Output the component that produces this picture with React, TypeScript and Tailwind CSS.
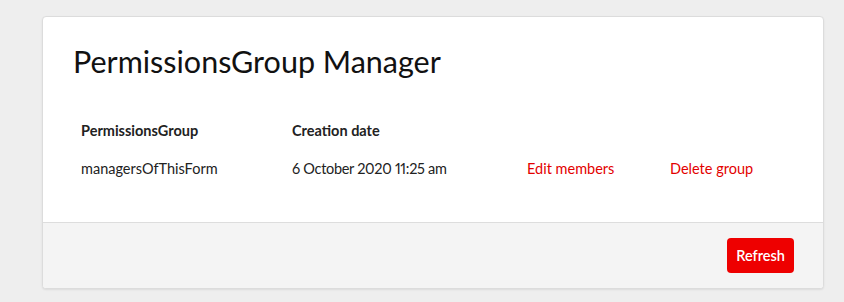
import React from "react";

export default function App() {
  const font = { fontFamily: "Lato, 'Noto Sans', sans-serif" };
  return (
    <div className="min-h-[302px] w-[844px] bg-[#eeeeee] pt-[16px] pl-[42px]" style={font}>
      <div className="w-[782px] rounded-[4px] border border-[#dcdcdc] bg-white shadow-[0_1px_2px_rgba(0,0,0,0.08)] overflow-hidden">
        <div className="px-[30px] pt-[26px] pb-[31px]">
          <h1 className="text-[30.5px] leading-[36px] text-[#111111]">PermissionsGroup Manager</h1>
          <div className="mt-[36px] pl-[8px] text-[14.5px] text-[#222222] proportional-nums">
            <div className="grid grid-cols-[211px_235px_143px_1fr] h-[32px] items-center font-bold">
              <div>PermissionsGroup</div>
              <div>Creation date</div>
              <div></div>
              <div></div>
            </div>
            <div className="grid grid-cols-[211px_235px_143px_1fr] h-[44px] items-center">
              <div>managersOfThisForm</div>
              <div className="tracking-[-0.3px]">6 October 2020 11:25 am</div>
              <div className="text-[#e30000]">Edit members</div>
              <div className="text-[#e30000]">Delete group</div>
            </div>
          </div>
        </div>
        <div className="flex h-[66px] items-center justify-end border-t border-[#dddddd] bg-[#f4f4f4] px-[29px]">
          <button className="h-[35px] rounded-[4px] bg-[#ee0000] px-[9px] text-[14.5px] font-semibold text-white">
            Refresh
          </button>
        </div>
      </div>
    </div>
  );
}
